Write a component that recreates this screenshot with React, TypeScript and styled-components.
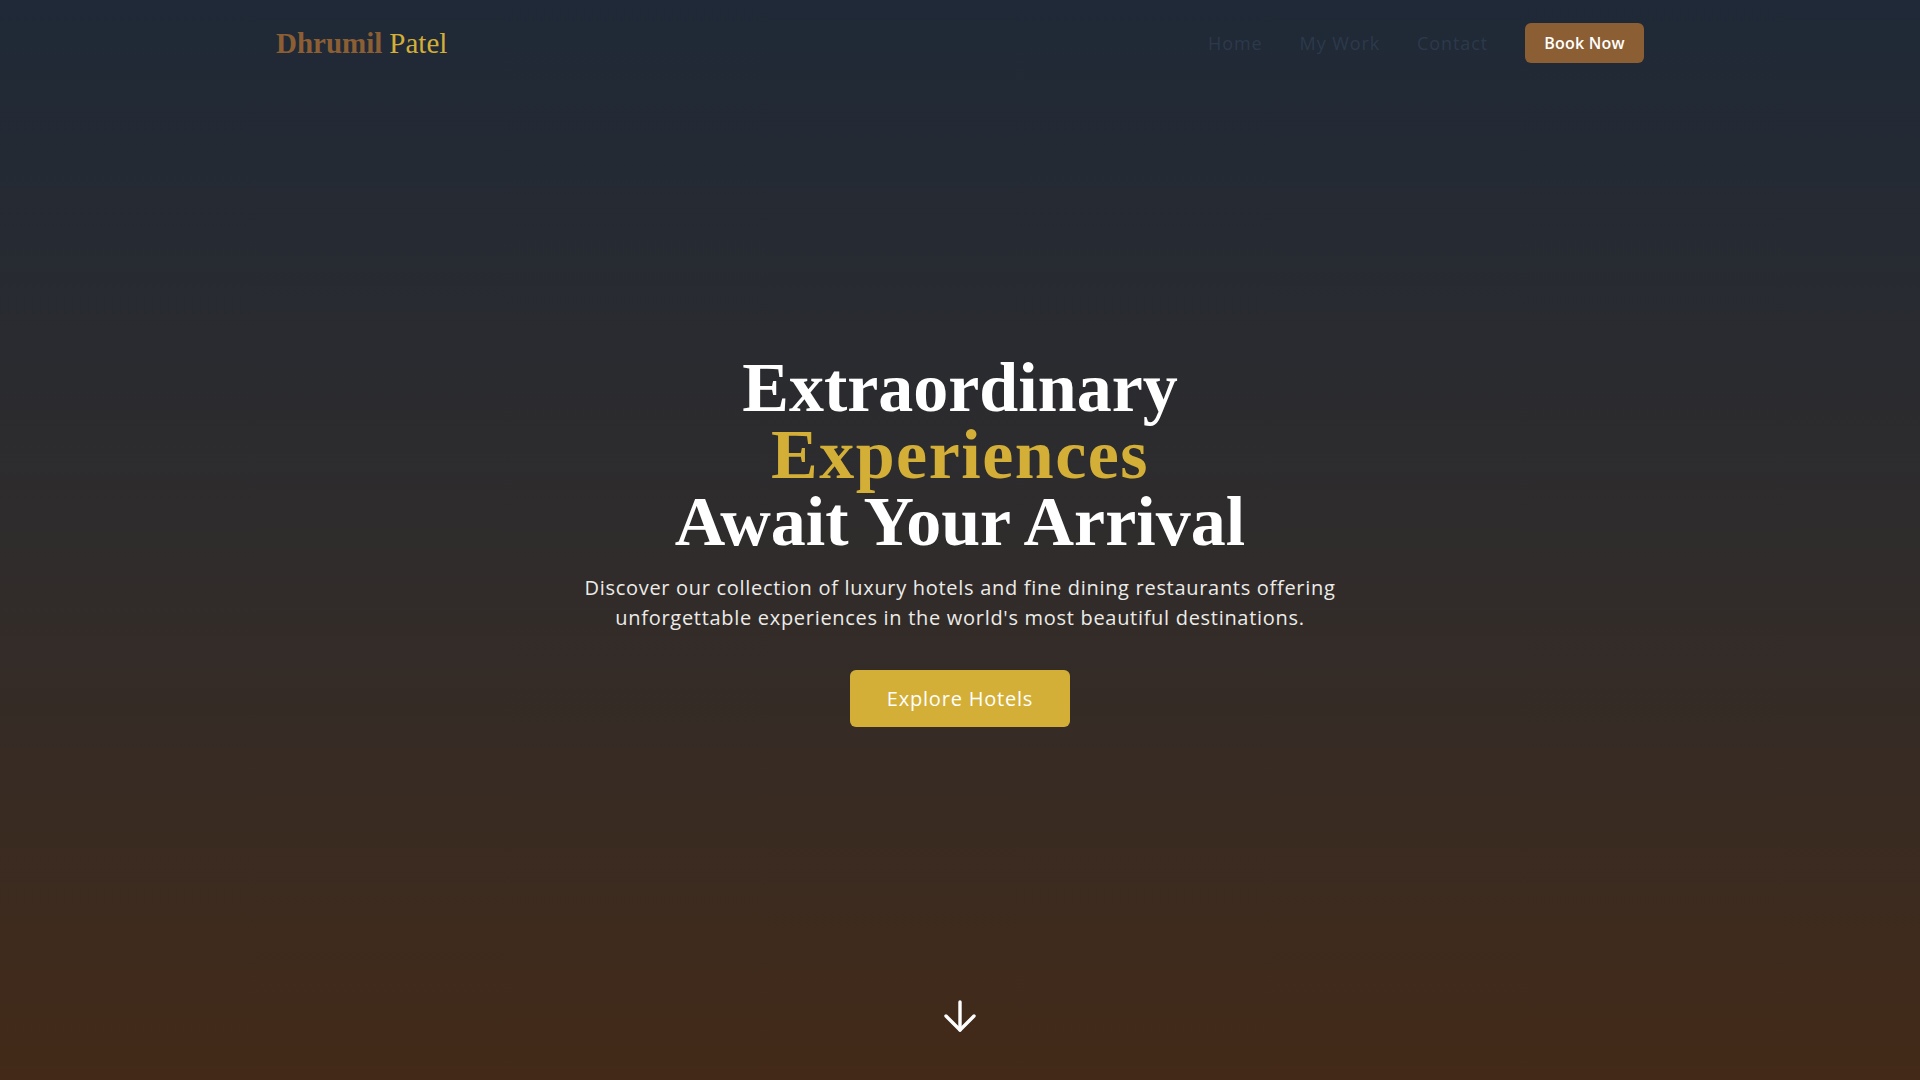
import React from "react";
import styled, { createGlobalStyle } from "styled-components";
import { ArrowDown } from "lucide-react";

const GlobalStyle = createGlobalStyle`
  * { box-sizing: border-box; }
  html, body { margin: 0; padding: 0; }
  body {
    font-family: "Open Sans", "Liberation Sans", sans-serif;
    background: #1f2937;
  }
`;

const Hero = styled.section`
  position: relative;
  min-height: 100vh;
  display: flex;
  flex-direction: column;
  align-items: center;
  justify-content: center;
  background: linear-gradient(to bottom, #1f2937 0%, #2f2c2c 50%, #432a18 100%);
  overflow: hidden;
`;

const Header = styled.header`
  position: absolute;
  top: 0;
  left: 0;
  right: 0;
  padding-top: 23px;
`;

const HeaderInner = styled.div`
  max-width: 1400px;
  margin: 0 auto;
  padding: 0 16px;
  display: flex;
  align-items: center;
  justify-content: space-between;
`;

const Logo = styled.a`
  font-family: "Liberation Serif", "Times New Roman", serif;
  font-size: 29px;
  line-height: 40px;
  text-decoration: none;
  display: flex;
  gap: 7px;
`;

const LogoPart = styled.span<{ $tone: "brown" | "gold" }>`
  color: ${(p) => (p.$tone === "brown" ? "#8b5e34" : "#d4af37")};
  font-weight: ${(p) => (p.$tone === "brown" ? 700 : 400)};
`;

const Nav = styled.nav`
  display: flex;
  align-items: center;
  gap: 37px;
`;

const NavLink = styled.a`
  font-family: "Open Sans", "Liberation Sans", sans-serif;
  font-size: 18px;
  letter-spacing: 0.9px;
  color: #2c394b;
  text-decoration: none;
`;

const BookButton = styled.button`
  font-family: "Open Sans", "Liberation Sans", sans-serif;
  font-size: 16px;
  font-weight: 600;
  letter-spacing: 0.2px;
  color: #ffffff;
  background: #8b5e34;
  border: none;
  border-radius: 6px;
  height: 40px;
  width: 119px;
  padding: 0;
  cursor: pointer;
`;

const Content = styled.div`
  display: flex;
  flex-direction: column;
  align-items: center;
  text-align: center;
  padding: 0 16px;
`;

const Title = styled.h1`
  margin: 0;
  font-family: "Liberation Serif", "Times New Roman", serif;
  font-weight: 700;
  font-size: 70px;
  line-height: 67px;
  color: #ffffff;
`;

const TitleLine = styled.span<{ $gold?: boolean }>`
  display: block;
  color: ${(p) => (p.$gold ? "#d4af37" : "#ffffff")};
  letter-spacing: ${(p) => (p.$gold ? "1.5px" : "0")};
`;

const Lead = styled.p`
  margin: 18px 0 0;
  max-width: 800px;
  font-size: 20px;
  letter-spacing: 0.7px;
  line-height: 30px;
  color: #ecebe8;
`;

const ExploreButton = styled.button`
  margin-top: 37px;
  font-family: "Open Sans", "Liberation Sans", sans-serif;
  font-size: 20px;
  font-weight: 500;
  letter-spacing: 0.8px;
  color: #ffffff;
  background: #d4af37;
  border: none;
  border-radius: 6px;
  width: 220px;
  height: 57px;
  cursor: pointer;
`;

const ScrollCue = styled.div`
  position: absolute;
  bottom: 40px;
  left: 50%;
  transform: translateX(-50%);
  color: #ffffff;
  display: flex;
`;

export default function App() {
  return (
    <>
      <GlobalStyle />
      <Hero>
        <Header>
          <HeaderInner>
            <Logo href="#">
              <LogoPart $tone="brown">Dhrumil</LogoPart>
              <LogoPart $tone="gold">Patel</LogoPart>
            </Logo>
            <Nav>
              <NavLink href="#">Home</NavLink>
              <NavLink href="#">My Work</NavLink>
              <NavLink href="#">Contact</NavLink>
              <BookButton>Book Now</BookButton>
            </Nav>
          </HeaderInner>
        </Header>
        <Content>
          <Title>
            <TitleLine>Extraordinary</TitleLine>
            <TitleLine $gold>Experiences</TitleLine>
            <TitleLine>Await Your Arrival</TitleLine>
          </Title>
          <Lead>
            Discover our collection of luxury hotels and fine dining restaurants offering
            unforgettable experiences in the world's most beautiful destinations.
          </Lead>
          <ExploreButton>Explore Hotels</ExploreButton>
        </Content>
        <ScrollCue>
          <ArrowDown size={48} strokeWidth={1.7} />
        </ScrollCue>
      </Hero>
    </>
  );
}
